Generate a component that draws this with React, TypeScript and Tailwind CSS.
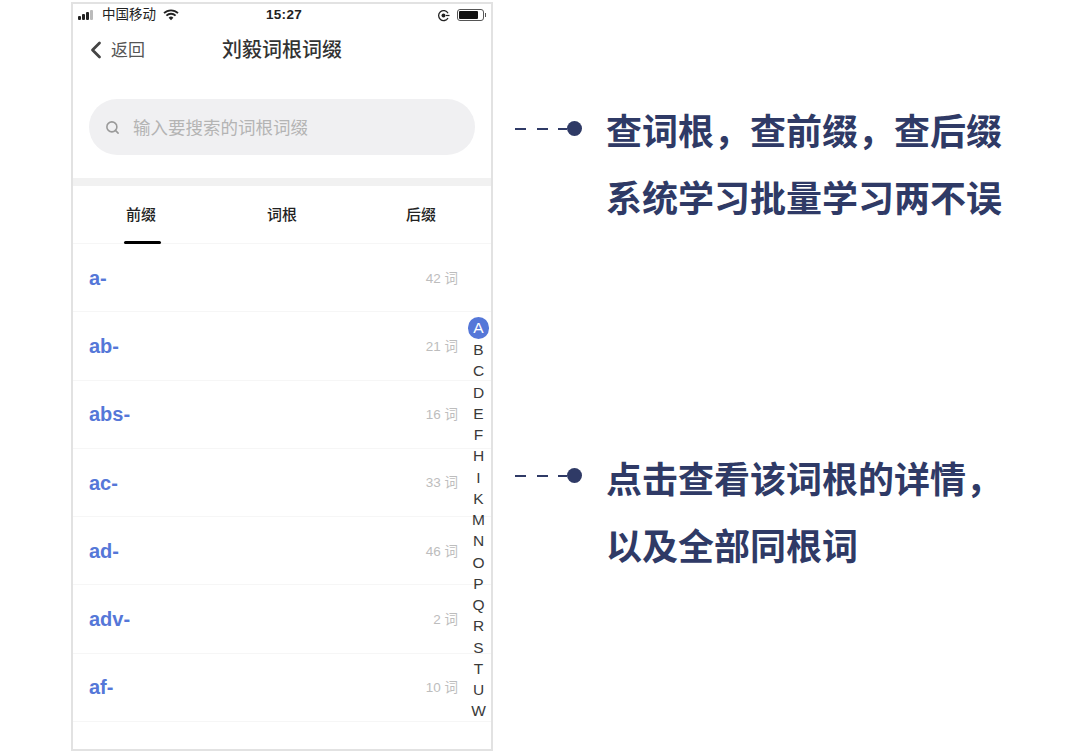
import { ChevronLeft, Search } from "lucide-react";

const FONT = "font-['Liberation_Sans','Noto_Sans_CJK_SC',sans-serif]";

const rows = [
  { name: "a-", count: 42 },
  { name: "ab-", count: 21 },
  { name: "abs-", count: 16 },
  { name: "ac-", count: 33 },
  { name: "ad-", count: 46 },
  { name: "adv-", count: 2 },
  { name: "af-", count: 10 },
];

const letters = "BCDEFHIKMNOPQRSTUW".split("");

function StatusBar() {
  return (
    <div className="relative flex h-[22px] items-center pl-[5px] pr-[5px] text-[13.5px] text-[#222]">
      <div className="flex items-end gap-[1px]">
        <span className="h-[4px] w-[3px] rounded-[1px] bg-[#222]" />
        <span className="h-[6px] w-[3px] rounded-[1px] bg-[#222]" />
        <span className="h-[8px] w-[3px] rounded-[1px] bg-[#222]" />
        <span className="h-[10px] w-[3px] rounded-[1px] bg-[#bbb]" />
      </div>
      <span className="ml-[9px]">中国移动</span>
      <svg className="ml-[7px]" width="16" height="12" viewBox="0 0 16 12">
        <path d="M1 4.2a10 10 0 0 1 14 0M3.4 6.6a6.6 6.6 0 0 1 9.2 0" fill="none" stroke="#222" strokeWidth="1.8" />
        <path d="M5.6 8.8a3.4 3.4 0 0 1 4.8 0L8 11.2z" fill="#222" />
      </svg>
      <span className="absolute left-[193px] text-[13.5px] font-bold tracking-[0.3px]">15:27</span>
      <div className="ml-auto flex items-center gap-[7px]">
        <svg width="13" height="13" viewBox="0 0 13 13">
          <path d="M11 4.2A5 5 0 1 0 11 9" fill="none" stroke="#222" strokeWidth="1.3" />
          <circle cx="6.5" cy="6.5" r="2" fill="#222" />
          <path d="M9 6.5h3.5" stroke="#222" strokeWidth="1.2" />
        </svg>
        <div className="flex items-center gap-[1px]">
          <div className="h-[12px] w-[27px] rounded-[3px] border border-[#555] p-[1px]">
            <div className="h-full w-[19px] rounded-[1px] bg-[#111]" />
          </div>
          <span className="h-[4px] w-[1px] bg-[#555]" />
        </div>
      </div>
    </div>
  );
}

function Callout({ lines, className, dotClass }: { lines: string[]; className: string; dotClass: string }) {
  return (
    <div className={`flex items-start ${className}`}>
      <div className={`flex h-[15px] items-center ${dotClass}`}>
        <span className="h-[2px] w-[11px] bg-[#2f3a66]" />
        <span className="ml-[11px] h-[2px] w-[11px] bg-[#2f3a66]" />
        <span className="ml-[10px] h-[2px] w-[9px] bg-[#2f3a66]" />
        <span className="h-[15px] w-[15px] rounded-full bg-[#2f3a66]" />
      </div>
      <div className="ml-[24px] text-[36px] leading-[67px] font-bold whitespace-nowrap text-[#2f3a66]">
        {lines.map((l) => (
          <div key={l}>{l}</div>
        ))}
      </div>
    </div>
  );
}

export default function App() {
  return (
    <div className={`flex h-[756px] w-[1065px] items-start overflow-hidden bg-white pt-[2px] pl-[71px] ${FONT}`}>
      {/* phone */}
      <div className="relative flex h-[749px] w-[422px] shrink-0 flex-col border-2 border-[#e2e2e2] bg-white">
        <StatusBar />

        <div className="relative flex h-[48px] items-center justify-center">
          <div className="absolute left-[9px] flex items-center text-[#444]">
            <ChevronLeft size={28} strokeWidth={2.4} />
            <span className="mt-[1px] ml-[1px] text-[17px] text-[#555]">返回</span>
          </div>
          <span className="text-[20px] font-medium text-[#333]">刘毅词根词缀</span>
        </div>

        <div className="mx-[16px] mt-[25px] flex h-[56px] w-[386px] items-center rounded-full bg-[#f0f0f2] pl-[16px]">
          <Search size={15} strokeWidth={2.5} className="text-[#9a9a9a]" />
          <span className="mt-[2px] ml-[13px] text-[17.5px] text-[#b4b4b4]">输入要搜索的词根词缀</span>
        </div>

        <div className="mt-[23px] h-[8px] bg-[#f1f1f1]" />

        <div className="relative flex h-[58px] items-center border-b border-[#f6f6f6] pt-[2px] text-[15px] font-medium text-[#222]">
          <span className="absolute left-[53px]">前缀</span>
          <span className="absolute left-[194px]">词根</span>
          <span className="absolute left-[333px]">后缀</span>
          <span className="absolute bottom-[-1px] left-[51px] h-[3px] w-[37px] rounded-full bg-black" />
        </div>

        <div className="flex flex-col">
          {rows.map((r) => (
            <div key={r.name} className="flex h-[68.3px] items-center border-b border-[#f6f6f6] pr-[33px] pl-[16px]">
              <span className="text-[20px] font-bold text-[#5577d8]">{r.name}</span>
              <span className="mt-[2px] ml-auto text-[13.5px] text-[#bdbdbd]">{r.count} 词</span>
            </div>
          ))}
        </div>

        {/* letter index */}
        <div className="absolute top-[313px] left-[394.5px] flex w-[22px] flex-col items-center text-[15.5px] text-[#3a3a3a]">
          <span className="flex h-[22px] w-[21px] items-center justify-center rounded-full bg-[#5577d8] text-white">A</span>
          {letters.map((c) => (
            <span key={c} className="flex h-[21.25px] items-center">
              {c}
            </span>
          ))}
        </div>
      </div>

      {/* callouts */}
      <div className="ml-[22px] flex flex-col">
        <Callout className="mt-[97px]" dotClass="mt-[22px]" lines={["查词根，查前缀，查后缀", "系统学习批量学习两不误"]} />
        <Callout className="mt-[214px]" dotClass="mt-[21px]" lines={["点击查看该词根的详情，", "以及全部同根词"]} />
      </div>
    </div>
  );
}
